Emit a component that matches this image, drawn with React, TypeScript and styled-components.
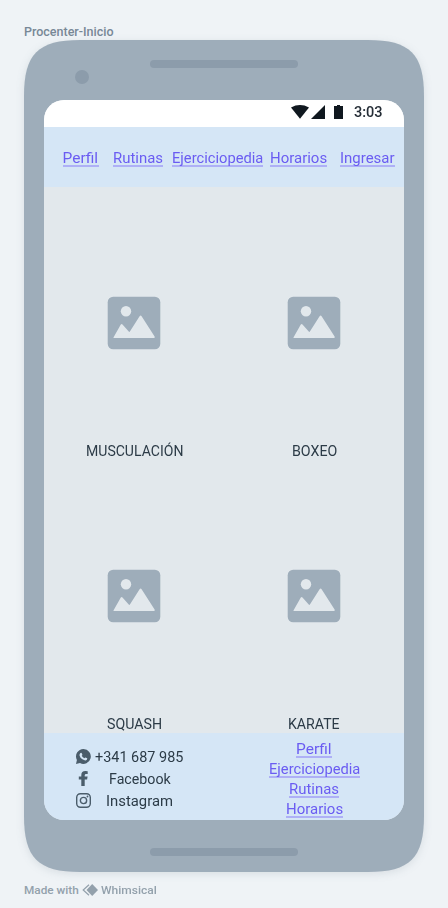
import React, { useLayoutEffect, useRef, useState } from "react";
import styled, { createGlobalStyle } from "styled-components";

const colors = {
  canvas: "#eff3f6",
  frame: "#9eadba",
  frameDetail: "#8c9cab",
  bar: "#d5e6f6",
  body: "#e2e8ec",
  ink: "#2c3b47",
  icon: "#4b5d6b",
  link: "#6a5cf2",
  underline: "#aeb0f6",
  caption: "#788896",
  muted: "#93a1ac",
};

const GlobalStyle = createGlobalStyle`
  *, *::before, *::after { box-sizing: border-box; }
  body { margin: 0; background: ${colors.canvas}; font-family: Roboto, "Liberation Sans", sans-serif; }
`;

/* Condensed lettering: each line is squeezed to its set width. */
const FitBox = styled.span<{ $width: number }>`
  display: block;
  flex: none;
  width: ${(p) => p.$width}px;
  white-space: nowrap;
`;
const FitInner = styled.span`
  display: inline-block;
  vertical-align: top;
  transform-origin: 0 0;
`;
function Fit({ width, children }: { width: number; children: string }) {
  const ref = useRef<HTMLSpanElement>(null);
  const [scale, setScale] = useState(1);
  useLayoutEffect(() => {
    if (ref.current) setScale(width / ref.current.offsetWidth);
  }, [width, children]);
  return (
    <FitBox $width={width}>
      <FitInner ref={ref} style={{ transform: `scaleX(${scale})` }}>{children}</FitInner>
    </FitBox>
  );
}

const Page = styled.main`
  width: 448px;
  height: 908px;
  padding: 24px 24px 0;
  display: flex;
  flex-direction: column;
  overflow: hidden;
`;
const Caption = styled.div`
  height: 16px;
  flex: none;
  font-size: 12.5px;
  font-weight: 500;
  line-height: 16px;
  color: ${colors.caption};
`;
const PhoneShadow = styled.div`
  flex: none;
  filter: drop-shadow(0 2px 4px rgba(50, 70, 90, 0.12));
`;
/* Smoothed corners, rounder toward the straight edges than a plain radius. */
const Phone = styled.section`
  width: 400px;
  height: 832px;
  padding: 20px 20px 0;
  clip-path: path("M0 56C0 14 14 0 56 0H344C386 0 400 14 400 56V776C400 818 386 832 344 832H56C14 832 0 818 0 776Z");
  background: ${colors.frame};
  display: flex;
  flex-direction: column;
`;
const PhoneTop = styled.div`
  height: 40px;
  flex: none;
  display: flex;
  align-items: flex-start;
`;
const Camera = styled.i`
  width: 14px;
  height: 14px;
  margin: 10px 61px 0 31px;
  border-radius: 50%;
  background: ${colors.frameDetail};
`;
const Speaker = styled.i`
  display: block;
  width: 148px;
  height: 8px;
  border-radius: 4px;
  background: ${colors.frameDetail};
`;
const PhoneBottom = styled.div`
  display: flex;
  justify-content: center;
  padding-top: 28px;
`;
const Screen = styled.div`
  height: 720px;
  flex: none;
  border-radius: 20px;
  overflow: hidden;
  background: ${colors.body};
  display: flex;
  flex-direction: column;
`;
const StatusBar = styled.div`
  height: 27px;
  flex: none;
  background: #fff;
  display: flex;
  align-items: flex-start;
  padding: 3px 21px 0 0;
  justify-content: flex-end;
  color: #252d36;
  font-size: 14.5px;
  font-weight: 500;
  line-height: 20px;
`;
const StatusIcons = styled.svg`
  display: block;
  margin: 1px 11px 0 0;
`;
const NavBar = styled.nav`
  height: 60px;
  flex: none;
  background: ${colors.bar};
  display: flex;
  padding: 21px 0 0 18.5px;
`;
const Link = styled.a<{ $gap?: number }>`
  flex: none;
  height: 19px;
  margin-right: ${(p) => p.$gap ?? 0}px;
  border-bottom: 2px solid ${colors.underline};
  color: ${colors.link};
  font-size: 15.5px;
  line-height: 20px;
`;
const Grid = styled.div`
  flex: none;
  display: grid;
  grid-template-columns: 180px 180px;
  grid-auto-rows: 273px;
`;
const Tile = styled.article`
  display: flex;
  flex-direction: column;
  align-items: center;
  padding-top: 109px;
  color: ${colors.ink};
  font-size: 15.5px;
  line-height: 20px;
`;
const Picture = styled.svg`
  display: block;
  flex: none;
  margin-bottom: 91px;
`;
const Footer = styled.footer`
  flex: 1;
  background: ${colors.bar};
  display: flex;
`;
const Contacts = styled.div`
  width: 180px;
  padding: 12px 0 0 32px;
`;
const Contact = styled.div<{ $gap: number }>`
  height: 22px;
  display: flex;
  align-items: center;
  gap: ${(p) => p.$gap}px;
  color: ${colors.ink};
  font-size: 15.5px;
  line-height: 22px;
`;
const ContactText = styled.span`
  padding-top: 2px;
`;
const ContactIcon = styled.span`
  width: 15px;
  height: 15px;
  flex: none;
  display: flex;
  justify-content: center;
  color: ${colors.icon};
`;
const FooterLinks = styled.div`
  width: 180px;
  padding-top: 6px;
  display: flex;
  flex-direction: column;
  align-items: center;
  gap: 1px;
`;
const Credit = styled.div`
  display: flex;
  align-items: flex-start;
  margin-top: 10px;
  line-height: 16px;
  font-size: 11.8px;
  font-weight: 500;
  color: ${colors.muted};
`;
const CreditMark = styled.svg`
  display: block;
  margin: 2px 2.5px 0 3px;
`;

const navLinks = [
  { text: "Perfil", width: 36, gap: 14.5 },
  { text: "Rutinas", width: 50, gap: 8.5 },
  { text: "Ejerciciopedia", width: 91, gap: 7.5 },
  { text: "Horarios", width: 57, gap: 13 },
  { text: "Ingresar", width: 55, gap: 0 },
];
const tiles = [
  { text: "MUSCULACIÓN", width: 97 },
  { text: "BOXEO", width: 45 },
  { text: "SQUASH", width: 55 },
  { text: "KARATE", width: 52 },
];
const footerLinks = [
  { text: "Perfil", width: 36 },
  { text: "Ejerciciopedia", width: 91 },
  { text: "Rutinas", width: 50 },
  { text: "Horarios", width: 57 },
];

const WhatsApp = () => (
  <svg width="15" height="15" viewBox="0 0 15 15">
    <path d="M7.5 0A7.45 7.45 0 1 1 4 14.1L0 15l.9-4A7.45 7.45 0 0 1 7.5 0Z" fill="currentColor" />
    <path d="M4.2 4.2q.8-1 1.4-.2l.8 1.7q.1.4-.7 1.1 1 1.8 2.7 2.5.7-1 1.1-.9l1.6.9q.5.4-.3 1.4-1.3 1.4-4-.1-2.9-1.9-3.3-4.2-.1-1.3.7-2.2Z" fill={colors.bar} />
  </svg>
);
const Facebook = () => (
  <svg width="15" height="15" viewBox="0 0 15 15" fill="currentColor">
    <path d="M5.3 15V8.4H2.8V5.4H5.3V4.2C5.3 1.3 6.6 0 9.4 0q1.4 0 2.3.3V2.9H10.3C9 2.9 8.7 3.4 8.7 4.5V5.4H11.6L11.1 8.4H8.7V15Z" />
  </svg>
);
const Instagram = () => (
  <svg width="15" height="15" viewBox="0 0 15 15" fill="none" stroke="currentColor" strokeWidth="1.4">
    <rect x=".7" y=".7" width="13.6" height="13.6" rx="3.7" />
    <circle cx="7.5" cy="7.5" r="3.15" />
    <circle cx="11.5" cy="3.5" r=".9" fill="currentColor" stroke="none" />
  </svg>
);

const contacts = [
  { text: "+341 687 985", width: 88.5, gap: 4, Icon: WhatsApp },
  { text: "Facebook", width: 61.5, gap: 17.5, Icon: Facebook },
  { text: "Instagram", width: 67, gap: 14.5, Icon: Instagram },
];

export default function App() {
  return (
    <>
      <GlobalStyle />
      <Page>
        <Caption><Fit width={90}>Procenter-Inicio</Fit></Caption>
        <PhoneShadow>
          <Phone>
            <PhoneTop>
              <Camera />
              <Speaker />
            </PhoneTop>
            <Screen>
              <StatusBar>
                <StatusIcons width="52" height="16" viewBox="0 0 52 16" fill="#10181f">
                  <path d="M0 3.5Q9 -1.3 18 3.5L9 14.7Z" />
                  <path d="M34 1V15H20Z" />
                  <path d="M43 2h3V1h3v1h3v13h-9Z" />
                </StatusIcons>
                <Fit width={29}>3:03</Fit>
              </StatusBar>
              <NavBar>
                {navLinks.map((l) => (
                  <Link key={l.text} $gap={l.gap}><Fit width={l.width}>{l.text}</Fit></Link>
                ))}
              </NavBar>
              <Grid>
                {tiles.map((t) => (
                  <Tile key={t.text}>
                    <Picture width="54" height="54" viewBox="0 0 54 54">
                      <rect x=".7" y=".7" width="52.6" height="52.6" rx="5.5" fill={colors.frame} />
                      <circle cx="19" cy="15.2" r="5.2" fill={colors.body} />
                      <path d="M6.6 41.2 13.8 28.6q.8-1 1.7 0l6.7 7.4q.3.1.7-.4L32.6 20.2q1-1.5 2 0L47.6 40.6q.6 1.2-.5 1.5H7.1q-1 0-.5-.9Z" fill={colors.body} />
                    </Picture>
                    <Fit width={t.width}>{t.text}</Fit>
                  </Tile>
                ))}
              </Grid>
              <Footer>
                <Contacts>
                  {contacts.map(({ text, width, gap, Icon }) => (
                    <Contact key={text} $gap={gap}>
                      <ContactIcon><Icon /></ContactIcon>
                      <ContactText><Fit width={width}>{text}</Fit></ContactText>
                    </Contact>
                  ))}
                </Contacts>
                <FooterLinks>
                  {footerLinks.map((l) => (
                    <Link key={l.text}><Fit width={l.width}>{l.text}</Fit></Link>
                  ))}
                </FooterLinks>
              </Footer>
            </Screen>
            <PhoneBottom><Speaker /></PhoneBottom>
          </Phone>
        </PhoneShadow>
        <Credit>
          <Fit width={55}>Made with</Fit>
          <CreditMark width="16" height="12" viewBox="0 0 16 12">
            <path d="M7 .7 1.2 6 7 11.3" fill="none" stroke={colors.muted} strokeWidth="1.2" />
            <path d="M10.2 0 16 6l-5.8 6-5.7-6Z" fill={colors.muted} />
          </CreditMark>
          <Fit width={56}>Whimsical</Fit>
        </Credit>
      </Page>
    </>
  );
}
